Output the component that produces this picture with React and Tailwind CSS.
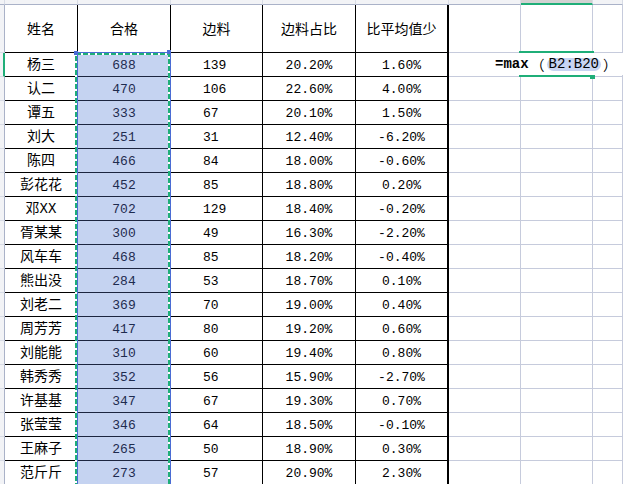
import React from "react";

const rows = [
  ["杨三", "688", "139", "20.20%", "1.60%"],
  ["认二", "470", "106", "22.60%", "4.00%"],
  ["谭五", "333", "67", "20.10%", "1.50%"],
  ["刘大", "251", "31", "12.40%", "-6.20%"],
  ["陈四", "466", "84", "18.00%", "-0.60%"],
  ["彭花花", "452", "85", "18.80%", "0.20%"],
  ["邓XX", "702", "129", "18.40%", "-0.20%"],
  ["胥某某", "300", "49", "16.30%", "-2.20%"],
  ["风车车", "468", "85", "18.20%", "-0.40%"],
  ["熊出没", "284", "53", "18.70%", "0.10%"],
  ["刘老二", "369", "70", "19.00%", "0.40%"],
  ["周芳芳", "417", "80", "19.20%", "0.60%"],
  ["刘能能", "310", "60", "19.40%", "0.80%"],
  ["韩秀秀", "352", "56", "15.90%", "-2.70%"],
  ["许基基", "347", "67", "19.30%", "0.70%"],
  ["张莹莹", "346", "64", "18.50%", "-0.10%"],
  ["王麻子", "265", "50", "18.90%", "0.30%"],
  ["范斤斤", "273", "57", "20.90%", "2.30%"],
];

const font = "font-['Liberation_Mono','Noto_Sans_CJK_SC',monospace]";

function HeaderStrip() {
  const seg = "h-[5px] border-b border-r border-b-[#aab2c8] border-r-[#d8dce6] bg-[#f2f3f6]";
  return (
    <div className="flex">
      <div className={`w-[5px] ${seg}`} />
      <div className={`w-[73px] ${seg}`} />
      <div className={`w-[93px] ${seg}`} />
      <div className={`w-[92px] ${seg}`} />
      <div className={`w-[93px] ${seg}`} />
      <div className={`w-[93px] ${seg}`} />
      <div className={`w-[72px] ${seg}`} />
      <div className="w-[72px] h-[5px] border-b-2 border-r border-b-[#1fae78] border-r-[#d8dce6] bg-[#d2d2d2]" />
      <div className={`flex-1 ${seg}`} />
    </div>
  );
}

function LeftStrip() {
  return (
    <div className="flex w-[5px] flex-col">
      <div className="h-[48px] border-r border-b border-r-[#aab2c8] border-b-[#d8dce6] bg-[#f2f3f6]" />
      {rows.map((r, i) => (
        <div
          key={i}
          className={
            i === 0
              ? "h-[24px] border-r-2 border-b border-r-[#1fae78] border-b-[#d8dce6] bg-[#f2f3f6]"
              : "h-[24px] border-r border-b border-r-[#aab2c8] border-b-[#d8dce6] bg-[#f2f3f6]"
          }
        />
      ))}
    </div>
  );
}

function Table() {
  const hdr = "flex h-[48px] items-center justify-center border-b border-r border-black pt-[4px] text-[14px] text-black";
  const grey = "border-b border-r border-[#c6cbdc]";
  return (
    <div className="flex flex-1 flex-col">
      <div className="flex">
        <div className={`w-[73px] ${hdr}`}>姓名</div>
        <div className={`w-[93px] ${hdr}`}>合格</div>
        <div className={`w-[92px] ${hdr}`}>边料</div>
        <div className={`w-[93px] ${hdr}`}>边料占比</div>
        <div className="flex h-[48px] w-[93px] items-center justify-center border-b border-r-2 border-black pt-[4px] text-[14px] text-black">比平均值少</div>
        <div className={`h-[48px] w-[72px] ${grey}`} />
        <div className={`h-[48px] w-[72px] ${grey}`} />
        <div className={`h-[48px] flex-1 ${grey}`} />
      </div>
      {rows.map((r, i) => (
        <div key={i} className="flex h-[24px]">
          <div className="flex w-[73px] items-center justify-center border-b border-r border-black pt-[2px] text-[14px] text-black">{r[0]}</div>
          <div className="flex w-[93px] items-center justify-center border-b border-r border-[#1c2540] bg-[#c5d3f1] pt-[2px] text-[13px] text-[#1e2b4f]">{r[1]}</div>
          <div className="flex w-[92px] items-center border-b border-r border-black pl-[32px] pt-[2px] text-[13px] text-black">{r[2]}</div>
          <div className="flex w-[93px] items-center justify-center border-b border-r border-black pt-[2px] text-[13px] text-black">{r[3]}</div>
          <div className="flex w-[93px] items-center justify-center border-b border-r-2 border-black pt-[2px] text-[13px] text-black">{r[4]}</div>
          <div className={`w-[72px] ${grey}`} />
          <div className={`w-[72px] ${grey}`} />
          <div className={`flex-1 ${grey}`} />
        </div>
      ))}
    </div>
  );
}

function Selection() {
  return (
    <svg className="absolute left-[70px] top-[48px]" width="110" height="440" viewBox="0 0 110 440">
      <path d="M7.5 4.5 H100.5 M7.5 4.5 V440 M100.5 4.5 V440" stroke="#4a6cd4" strokeWidth="1" fill="none" />
      <path d="M6 440 V6 H99 V440" stroke="#ffffff" strokeWidth="2" fill="none" />
      <path d="M6 440 V6 H99 V440" stroke="#1fae78" strokeWidth="2" strokeDasharray="5 2" fill="none" />
      <rect x="4" y="3" width="4" height="4" fill="#4a6cd4" />
      <rect x="97" y="2" width="4" height="4" fill="#4a6cd4" />
    </svg>
  );
}

function Editor() {
  return (
    <>
      <div className="absolute left-[449px] right-0 top-[53px] flex h-[22px] items-center bg-white pl-[46px] pt-[1px] text-[14px] text-black">
        <span className="font-bold">=max</span>
        <span className="ml-[2px] font-['Noto_Sans_CJK_SC',sans-serif]">（</span>
        <span className="ml-[2px] rounded-full bg-[#c8d4f2] px-[2px] leading-[13px]">B2:B20</span>
        <span className="ml-[2px] font-['Noto_Sans_CJK_SC',sans-serif]">）</span>
      </div>
      <div className="absolute left-[519px] top-[51px] h-[2px] w-[75px] bg-[#1fae78]" />
      <div className="absolute left-[519px] top-[75px] h-[2px] w-[72px] bg-[#1fae78]" />
      <div className="absolute left-[590px] top-[75px] h-[4px] w-[5px] bg-[#1fae78]" />
    </>
  );
}

export default function App() {
  return (
    <div className={`relative h-[484px] w-[623px] overflow-hidden bg-white ${font}`}>
      <HeaderStrip />
      <div className="flex">
        <LeftStrip />
        <Table />
      </div>
      <Selection />
      <Editor />
    </div>
  );
}
